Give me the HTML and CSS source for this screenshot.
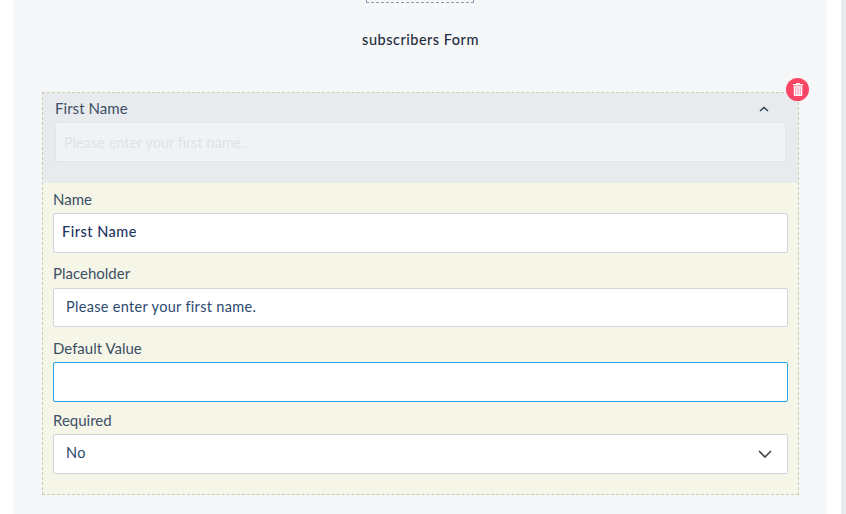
FILE: index.html
```html
<!DOCTYPE html>
<html lang="en">
<head>
<meta charset="utf-8">
<title>subscribers Form</title>
<link rel="stylesheet" href="styles.css">
</head>
<body>
<div class="page">
  <main class="panel">
    <div class="drop-stub"></div>
    <h1 class="form-title">subscribers Form</h1>
    <section class="field-block">
      <button class="delete-btn" aria-label="Delete">
        <svg width="10" height="13" viewBox="0 0 10 13"><path fill="#fff" d="M3.300 0h3.400l.4 1H10v1.400H0V1h2.900zM.7 3.200h8.600V12a1 1 0 0 1-1 1H1.700a1 1 0 0 1-1-1z"/><path fill="#f7a3b8" d="M2 4.300h1.300v7.400H2zM4.350 4.300h1.300v7.400H4.350zM6.700 4.300H8v7.400H6.700z"/></svg>
      </button>
      <div class="preview">
        <div class="preview-head">
          <span class="preview-label">First Name</span>
          <svg class="caret-up" width="10" height="6" viewBox="0 0 10 6"><path d="M1 5l4-3.600L9 5" fill="none" stroke="#2c3e50" stroke-width="1.500"/></svg>
        </div>
        <div class="preview-input">Please enter your first name.</div>
      </div>
      <div class="editor">
        <div class="row">
          <label class="label">Name</label>
          <div class="input input-name">First Name</div>
        </div>
        <div class="row row-placeholder">
          <label class="label">Placeholder</label>
          <div class="input input-short">Please enter your first name.</div>
        </div>
        <div class="row row-default">
          <label class="label">Default Value</label>
          <div class="input input-focus"></div>
        </div>
        <div class="row row-required">
          <label class="label">Required</label>
          <div class="input input-select">
            <span class="select-value">No</span>
            <svg width="14" height="8" viewBox="0 0 14 8"><path d="M1 1l6 6 6-6" fill="none" stroke="#444" stroke-width="1.600"/></svg>
          </div>
        </div>
      </div>
    </section>
  </main>
  <div class="gutter"></div>
  <div class="edge"></div>
</div>
</body>
</html>
```
FILE: styles.css
```css
* { box-sizing: border-box; }
html, body { margin: 0; height: 100%; background: #fff; overflow: hidden; }
body { font-family: "Lato", "Open Sans", sans-serif; color: #2f4258; }
.page { display: flex; height: 514px; padding-left: 13px; }
.panel { width: 814px; background: #f6f7f9; padding: 0 28px 0 29px; }
.gutter { width: 14px; }
.edge { width: 5px; background: #e8ecef; }
.drop-stub { width: 108px; height: 3px; margin: 0 0 0 324px; border: 1px dashed #8d99b3; border-top: 0; }
.form-title { margin: 28px 0 0; height: 61px; line-height: 18px; font-size: 14.500px; font-weight: 500; letter-spacing: 0.500px; text-align: center; color: #1f2d3d; }
.field-block { position: relative; width: 757px; height: 403px; border: 1px dashed #c9cbb4; background: #f5f6e7; }
.delete-btn { position: absolute; top: -15px; right: -11px; width: 23px; height: 23px; padding: 0; border: 0; border-radius: 50%; background: #fb4565; display: flex; align-items: center; justify-content: center; }
.preview { height: 90px; background: #e8ebee; padding: 7px 12px 0; }
.preview-head { display: flex; justify-content: space-between; align-items: center; height: 17px; padding-right: 17px; margin-bottom: 5px; }
.preview-label { padding-bottom: 2px; font-size: 15px; letter-spacing: 0.050px; color: #3d4f66; }
.preview-input { height: 40px; line-height: 39px; padding-left: 8px; border: 1px solid #e3e7ea; border-radius: 2px; background: #f0f3f5; font-size: 14.500px; color: #dfe3e7; }
.editor { padding: 0 10px; }
.row { display: flex; flex-direction: column; }
.label { height: 30px; line-height: 32px; font-size: 15px; color: #3d4f66; }
.input { height: 40px; border: 1px solid #cfd5de; border-radius: 2px; background: #fff; font-size: 14.500px; letter-spacing: 0.320px; line-height: 36px; color: #2c4a70; padding-left: 12px; }
.input-name { padding-left: 8px; font-weight: 500; letter-spacing: 0.500px; color: #1d3461; }
.row-placeholder .label { height: 35px; line-height: 40px; }
.input-short { height: 39px; line-height: 35px; }
.row-default .label { height: 35px; line-height: 42px; }
.input-focus { border-color: #22a5e4; }
.row-required .label { height: 32px; line-height: 36px; }
.input-select { display: flex; justify-content: space-between; align-items: center; padding-right: 15px; }
.select-value { padding-bottom: 2px; }
```
